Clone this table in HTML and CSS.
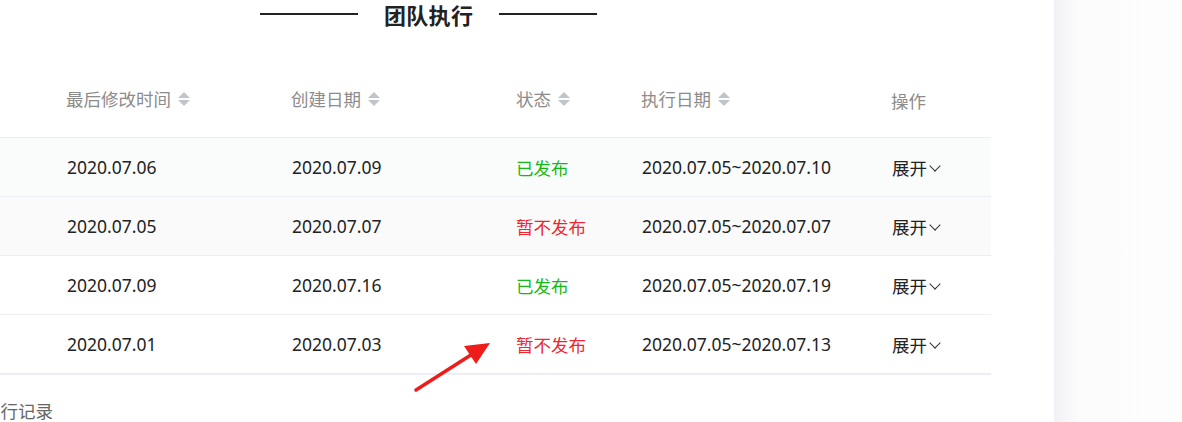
FILE: index.html
```html
<!DOCTYPE html>
<html lang="zh-CN">
<head>
    <meta charset="UTF-8">
    <title>团队执行</title>
    <link rel="stylesheet" href="styles.css">
</head>
<body>
    <div class="page">
        <div class="main">
            <div class="title">
                <span class="title-line"></span>
                <h2>团队执行</h2>
                <span class="title-line"></span>
            </div>

            <div class="table">
                <div class="row head">
                    <div class="cell"></div>
                    <div class="cell">最后修改时间 <span class="sort"></span></div>
                    <div class="cell">创建日期 <span class="sort"></span></div>
                    <div class="cell">状态 <span class="sort"></span></div>
                    <div class="cell">执行日期 <span class="sort"></span></div>
                    <div class="cell op-head">操作</div>
                </div>
                <div class="row hover">
                    <div class="cell"></div>
                    <div class="cell">2020.07.06</div>
                    <div class="cell">2020.07.09</div>
                    <div class="cell ok">已发布</div>
                    <div class="cell">2020.07.05~2020.07.10</div>
                    <div class="cell">展开<span class="chev"></span></div>
                </div>
                <div class="row stripe">
                    <div class="cell"></div>
                    <div class="cell">2020.07.05</div>
                    <div class="cell">2020.07.07</div>
                    <div class="cell no">暂不发布</div>
                    <div class="cell">2020.07.05~2020.07.07</div>
                    <div class="cell">展开<span class="chev"></span></div>
                </div>
                <div class="row">
                    <div class="cell"></div>
                    <div class="cell">2020.07.09</div>
                    <div class="cell">2020.07.16</div>
                    <div class="cell ok">已发布</div>
                    <div class="cell">2020.07.05~2020.07.19</div>
                    <div class="cell">展开<span class="chev"></span></div>
                </div>
                <div class="row last">
                    <div class="cell"></div>
                    <div class="cell">2020.07.01</div>
                    <div class="cell">2020.07.03</div>
                    <div class="cell no">暂不发布</div>
                    <div class="cell">2020.07.05~2020.07.13</div>
                    <div class="cell">展开<span class="chev"></span></div>
                </div>
            </div>

            <p class="record">执行记录</p>

            <!-- пометка-стрелка поверх таблицы -->
            <svg class="arrow" width="90" height="60" viewBox="0 0 90 60">
                <line x1="4" y1="52" x2="62" y2="15" stroke="#ef1c1c" stroke-width="3.5" stroke-linecap="round"/>
                <polygon points="78,5 52,8 64,26" fill="#ef1c1c"/>
            </svg>
        </div>
        <div class="side"></div>
    </div>
</body>
</html>
```

FILE: styles.css
```css
html, body {
    margin: 0;
    padding: 0;
    height: 100%;
    overflow: hidden;
}
body {
    font-family: "Noto Sans", "Noto Sans CJK SC", sans-serif;
    background-color: #fff;
    color: #222;
}
.page {
    display: flex;
    height: 422px;
}
.main {
    width: 1054px;
    flex-shrink: 0;
    position: relative;
    background-color: #fff;
}
.side {
    flex: 1;
    background: linear-gradient(to right, #f1f1f7, #fcfcfd 26px, #fdfdfd);
}
.title {
    display: flex;
    align-items: center;
    height: 28px;
    padding-left: 260px;
}
.title-line {
    width: 98px;
    height: 2px;
    background-color: #222;
}
.title h2 {
    margin: 0 26px;
    font-size: 22px;
    font-weight: bold;
    font-family: "Noto Sans CJK SC", sans-serif;
    line-height: 28px;
    color: #222;
    letter-spacing: 0.3px;
}
.table {
    width: 991px;
    margin-top: 35px;
}
.row {
    display: grid;
    grid-template-columns: 67px 225px 225px 125px 250px 99px;
    align-items: center;
    height: 58px;
    border-bottom: 1px solid #ebeef5;
    font-size: 17.5px;
}
.row.head {
    height: 74px;
    color: #8c8c8c;
    font-family: "Noto Sans CJK SC", sans-serif;
}
.row.head .cell {
    display: flex;
    align-items: center;
    padding-bottom: 3px;
    margin-left: -1px;
}
.row.hover {
    background-color: #fafcfb;
}
.row.stripe {
    background-color: #fafafa;
}
.row.last {
    border-bottom: 2px solid #ebeef5;
}
.cell {
    white-space: nowrap;
}
.row.head .op-head {
    padding-bottom: 0;
    padding-top: 1px;
}
.sort {
    display: inline-block;
    position: relative;
    width: 12px;
    height: 14px;
    margin-left: 7px;
}
.sort::before,
.sort::after {
    content: "";
    position: absolute;
    left: 0;
    border-left: 6px solid transparent;
    border-right: 6px solid transparent;
}
.sort::before {
    top: 0;
    border-bottom: 6px solid #c0c4cc;
}
.sort::after {
    bottom: 0;
    border-top: 6px solid #c0c4cc;
}
.ok {
    color: #15b915;
    font-family: "Noto Sans CJK SC", sans-serif;
    margin-left: -1px;
}
.no {
    color: #f0262d;
    font-family: "Noto Sans CJK SC", sans-serif;
    margin-left: -1px;
}
.chev {
    display: inline-block;
    width: 7px;
    height: 7px;
    border-right: 1px solid #333;
    border-bottom: 1px solid #333;
    transform: rotate(45deg);
    margin-left: 4px;
    position: relative;
    top: -5px;
}
.record {
    margin: 23px 0 0 -17px;
    font-size: 17.5px;
    color: #666;
    font-family: "Noto Sans CJK SC", sans-serif;
}
.arrow {
    position: absolute;
    left: 412px;
    top: 338px;
}
```
